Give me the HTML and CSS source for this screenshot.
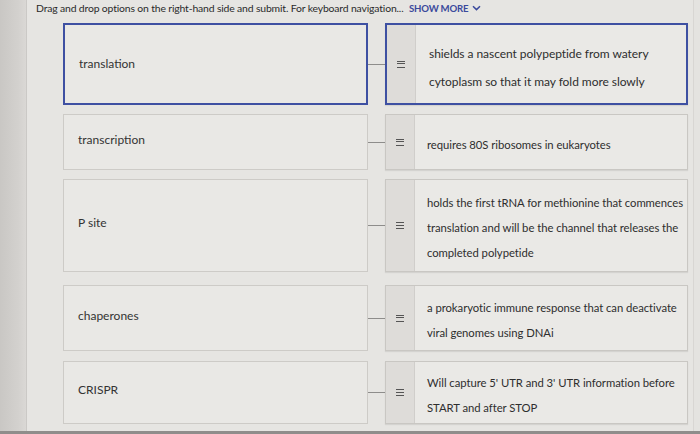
FILE: index.html
```html
<!DOCTYPE html>
<html>
<head>
<meta charset="utf-8">
<link rel="stylesheet" href="styles.css">
</head>
<body>
<div class="screen">
  <div class="edge"></div>
  <div class="page">
    <p class="instructions">Drag and drop options on the right-hand side and submit. For keyboard navigation... <span class="more">SHOW MORE <svg class="chev" width="9" height="6" viewBox="0 0 9 6"><path d="M1 1.2 L4.5 4.6 L8 1.2" fill="none" stroke="#3b4a9c" stroke-width="1.5"/></svg></span></p>
    <div class="rows">
      <div class="row r1 active">
        <div class="term">translation</div>
        <div class="link"></div>
        <div class="def">
          <div class="handle"><span class="grip"></span></div>
          <div class="def-text wide">shields a nascent polypeptide from watery<br>cytoplasm so that it may fold more slowly</div>
        </div>
      </div>
      <div class="row r2">
        <div class="term">transcription</div>
        <div class="link"></div>
        <div class="def">
          <div class="handle"><span class="grip"></span></div>
          <div class="def-text">requires 80S ribosomes in eukaryotes</div>
        </div>
      </div>
      <div class="row r3">
        <div class="term">P site</div>
        <div class="link"></div>
        <div class="def">
          <div class="handle"><span class="grip"></span></div>
          <div class="def-text">holds the first tRNA for methionine that commences<br>translation and will be the channel that releases the<br>completed polypetide</div>
        </div>
      </div>
      <div class="row r4">
        <div class="term">chaperones</div>
        <div class="link"></div>
        <div class="def">
          <div class="handle"><span class="grip"></span></div>
          <div class="def-text">a prokaryotic immune response that can deactivate<br>viral genomes using DNAi</div>
        </div>
      </div>
      <div class="row r5">
        <div class="term">CRISPR</div>
        <div class="link"></div>
        <div class="def">
          <div class="handle"><span class="grip"></span></div>
          <div class="def-text">Will capture 5' UTR and 3' UTR information before<br>START and after STOP</div>
        </div>
      </div>
    </div>
  </div>
</div>
</body>
</html>
```

FILE: styles.css
```css
* { box-sizing: border-box; }
html, body { margin: 0; padding: 0; }
body {
  width: 700px;
  height: 434px;
  overflow: hidden;
  background: #e4e3e0;
  font-family: Lato, "Open Sans", sans-serif;
  color: #2e2e2e;
}
.screen {
  display: flex;
  height: 434px;
  border-bottom: 3px solid #8f8d8b;
}
.edge {
  width: 27px;
  flex: none;
  background: linear-gradient(90deg, #c9c7c4 0%, #d3d1ce 70%, #dad8d5 100%);
  border-right: 1px solid #cbc9c6;
}
.page {
  flex: 1;
  background: #e6e5e2;
  border-right: 1px solid #d8d6d3;
  margin-right: 6px;
}
.instructions {
  margin: 0;
  padding: 2px 0 0 9px;
  font-size: 10.4px;
  line-height: 13px;
  color: #2a2a2a;
  letter-spacing: -0.15px;
  white-space: nowrap;
}
.more {
  color: #3b4a9c;
  font-weight: 700;
  font-size: 9.6px;
  letter-spacing: -0.2px;
  margin-left: 3px;
}
.chev { vertical-align: 1px; margin-left: 2px; }
.rows {
  display: flex;
  flex-direction: column;
  gap: 9px;
  padding: 8px 0 0 36px;
}
.row {
  display: flex;
  align-items: stretch;
}
.r1 { height: 82px; }
.r2 { height: 56px; }
.r3 { height: 93px; }
.r4 { height: 66px; margin-top: 4px; }
.r5 { height: 63px; margin-top: 1px; }
.term {
  width: 305px;
  flex: none;
  display: flex;
  align-items: center;
  padding-left: 14px;
  padding-bottom: 6px;
  font-size: 12px;
  background: #e9e8e5;
  border: 1px solid #cdcbc7;
  color: #333;
}
.r1 .term { padding-bottom: 2px; }
.link {
  width: 17px;
  flex: none;
  align-self: center;
  height: 1px;
  background: #8e8d8b;
}
.def {
  width: 303px;
  flex: none;
  display: flex;
  background: #eae9e6;
  border: 1px solid #c9c7c3;
  box-shadow: 0 1px 1px rgba(0,0,0,0.08);
}
.active .term, .active .def {
  border: 2px solid #3e50a2;
}
.handle {
  width: 29px;
  flex: none;
  display: flex;
  align-items: center;
  justify-content: center;
  background: #dedcd9;
  border-right: 1px solid #d0cecb;
}
.grip {
  display: block;
  width: 8px;
  height: 7px;
  border-top: 1.4px solid #555;
  border-bottom: 1.4px solid #555;
  position: relative;
}
.grip::after {
  content: "";
  position: absolute;
  left: 0;
  right: 0;
  top: 1.6px;
  border-top: 1.4px solid #555;
}
.def-text {
  display: flex;
  align-items: center;
  padding-left: 12px;
  padding-top: 4px;
  font-size: 11.3px;
  line-height: 25px;
  color: #2e2e2e;
  letter-spacing: -0.05px;
  white-space: nowrap;
}
.def-text.wide { line-height: 28px; font-size: 12px; padding-top: 8px; padding-left: 13px; }
```
